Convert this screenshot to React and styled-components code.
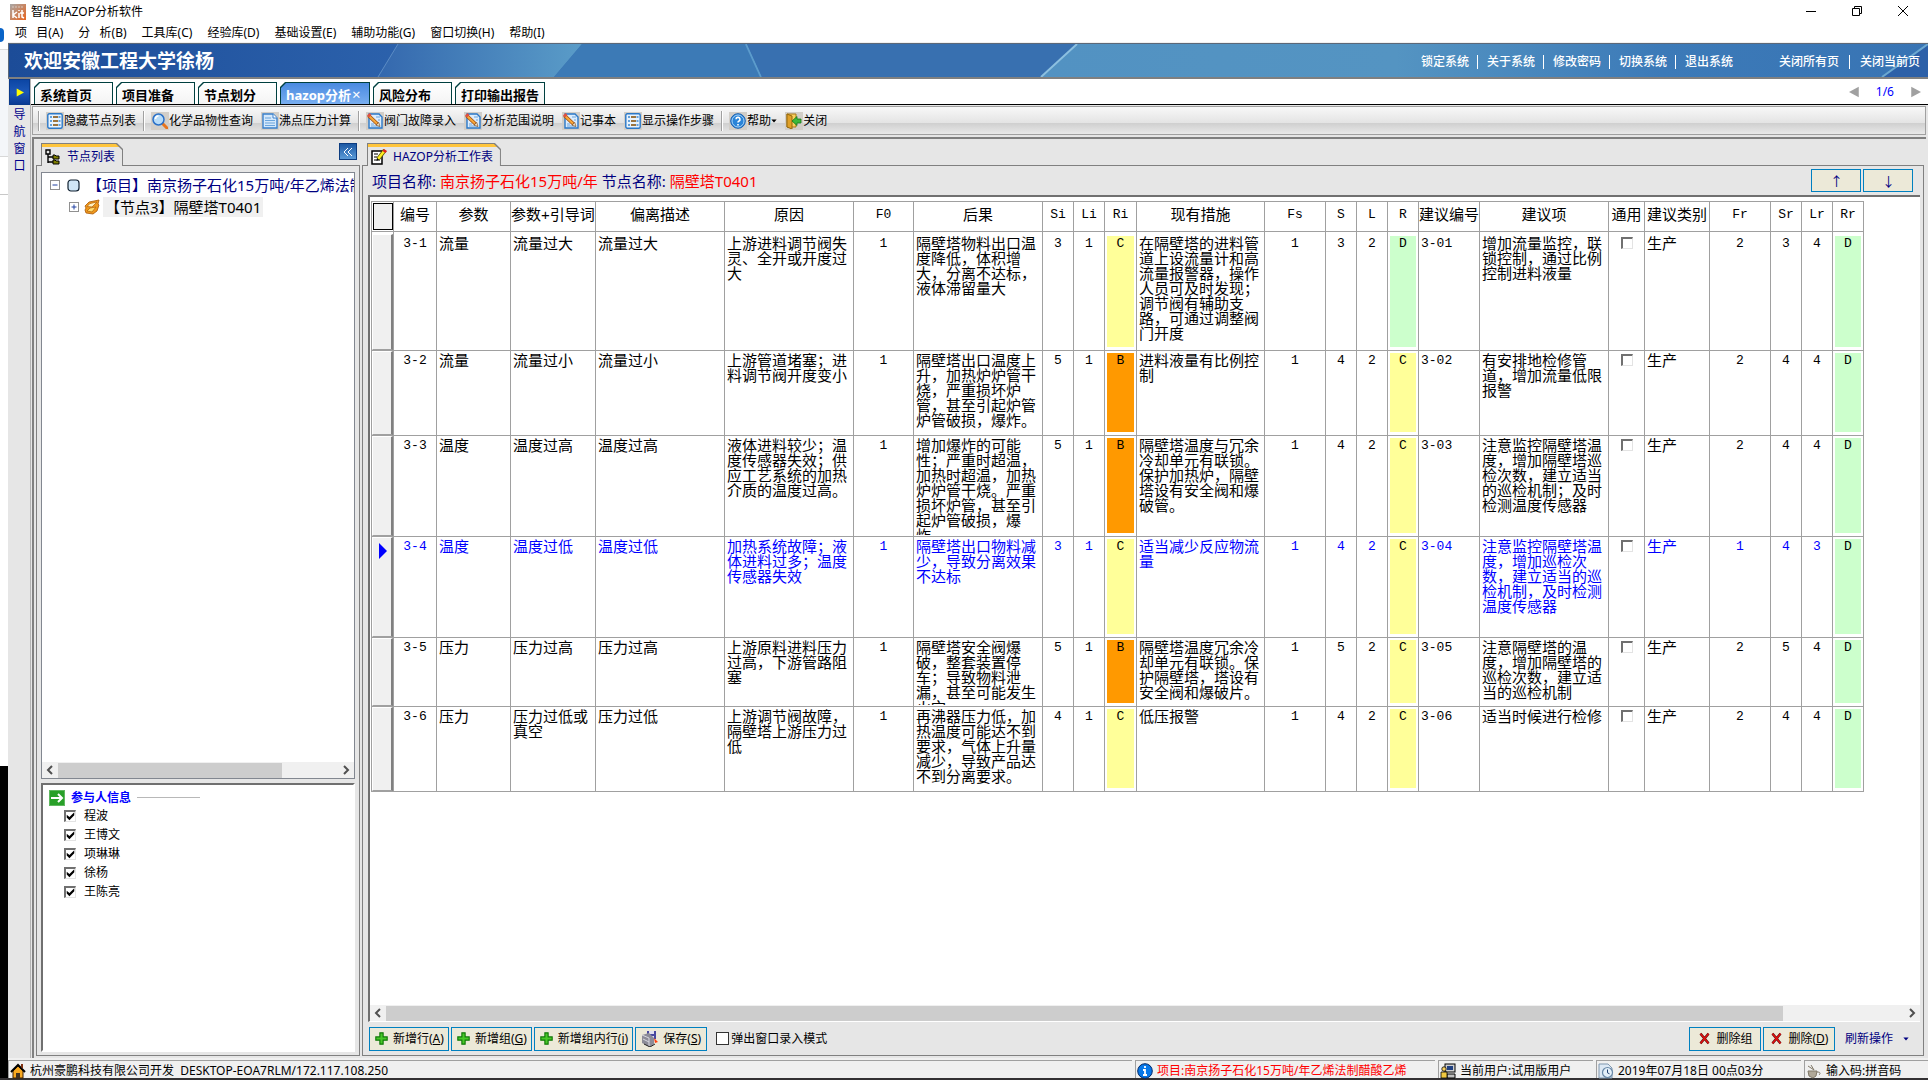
import styled, { createGlobalStyle, css } from "styled-components";

const GlobalStyle = createGlobalStyle`
* {
box-sizing: border-box;
}
body {
margin: 0;
background: #333133;
font-family: "Noto Sans", "Noto Sans CJK SC", sans-serif;
font-size: 12px;
line-height: 16px;
color: #000000;
text-spacing-trim: space-all;
}
button, input {
font: inherit;
color: inherit;
margin: 0;
}
a {
color: inherit;
text-decoration: none;
}
`;

const Screen = styled.div`
display: flex;
height: 100vh;
padding-bottom: 2px;
`;

const DesktopStrip = styled.div`
width: 8px;
background: linear-gradient(#ffffff 49px, #dcdcdc 49px, #dcdcdc 50px, #f4f6f9 50px, #f4f6f9 156px, #d8d8d8 156px, #d8d8d8 157px, #ffffff 157px, #ffffff 194px, #c8c8c8 194px, #c8c8c8 195px, #ffffff 195px, #ffffff 766px, #000000 766px);
`;

const DesktopDot = styled.div`
width: 4px;
height: 14px;
margin-top: 28px;
border-radius: 0 7px 7px 0;
background: #0a64c8;
`;

const Window = styled.div`
flex: 1;
min-width: 0;
display: flex;
flex-direction: column;
background: #ffffff;
`;

const TitleBar = styled.header`
display: flex;
align-items: center;
gap: 5px;
height: 22px;
padding: 2px 19px 0 2px;
`;

const WindowTitle = styled.h1`
flex: 1;
margin: 0;
font-size: 12px;
font-weight: 400;
`;

const WindowButtons = styled.div`
display: flex;
gap: 34px;
margin-bottom: 2px;
`;

const WindowButton = styled.button`
display: flex;
padding: 0;
border: 0;
background: none;
`;

const MenuBar = styled.nav`
display: flex;
align-items: center;
gap: 15px;
height: 21px;
padding: 2px 0 0 7px;
border-bottom: 1px solid #f0f0f0;
`;

const MenuItem = styled.button`
padding: 0;
border: 0;
background: none;
white-space: pre;
`;

const Banner = styled.div`
position: relative;
display: flex;
align-items: center;
justify-content: space-between;
height: 36px;
padding: 0 8px 0 15px;
border: solid #5c6878;
border-width: 1px 0 2px 1px;
border-bottom-color: #808080;
background: #3a74b4;
color: #ffffff;
`;

const BannerArt = styled.svg`
position: absolute;
inset: 0;
width: 100%;
height: 100%;
`;

const BannerTitle = styled.h2`
position: relative;
margin: 0;
font-size: 19px;
line-height: 26px;
font-weight: 700;
`;

const BannerLinks = styled.div`
position: relative;
display: flex;
gap: 46px;
padding-top: 2px;
font-weight: 500;
`;

const LinkGroup = styled.div`
display: flex;

a + a {
margin-left: ${({ $wide }) => ($wide ? "10px" : "8px")};
padding-left: ${({ $wide }) => ($wide ? "10px" : "9px")};
border-left: 1px solid #ffffff;
}
a {
line-height: 14px;
}
`;

const Body = styled.div`
flex: 1;
min-height: 0;
display: flex;
background: #e6e6e6;
`;

const NavRail = styled.aside`
width: 22px;
margin-left: 1px;
border-right: 1px solid #b4b4b4;
display: flex;
flex-direction: column;
align-items: center;
`;

const NavToggle = styled.button`
display: flex;
align-items: center;
justify-content: center;
width: 100%;
height: 26px;
padding: 0;
border: 1px solid #0a3a8c;
background: linear-gradient(#0c46a4, #1c58b8 50%, #0a3a94);
`;

const NavLabel = styled.div`
width: 12px;
margin-top: 1px;
line-height: 17px;
color: #00008b;
`;

const Content = styled.main`
flex: 1;
min-width: 0;
display: flex;
flex-direction: column;
`;

const TabBar = styled.div`
display: flex;
align-items: flex-end;
gap: 3px;
height: 26px;
padding: 0 7px 0 3px;
border-bottom: 1px solid #000000;
background: #ffffff;
`;

const PageTab = styled.button`
position: relative;
isolation: isolate;
width: ${({ $wide }) => ($wide ? "90px" : "79px")};
height: 22px;
padding: 3px 0 0 6px;
border: 0;
background: #004040;
clip-path: polygon(5px 0, 100% 0, 100% 100%, 0 100%, 0 5px);
color: ${({ $active }) => ($active ? "#ffffff" : "#000000")};
font-size: 13px;
line-height: 18px;
font-weight: 700;
text-align: left;
white-space: nowrap;

&::before {
content: "";
position: absolute;
inset: 1px 1px 0 1px;
z-index: -1;
clip-path: polygon(5px 0, 100% 0, 100% 100%, 0 100%, 0 5px);
background: ${({ $active }) => ($active ? "linear-gradient(#4a8ae0, #78aef0)" : "linear-gradient(#ffffff, #f4f4f4)")};
}
`;

const TabClose = styled.span`
margin-left: 1px;
font-weight: 400;
font-size: 15px;
`;

const Pager = styled.div`
display: flex;
align-items: center;
gap: 15px;
margin-left: auto;
height: 25px;
color: #0000ff;
`;

const PagerButton = styled.button`
display: flex;
padding: 0;
border: 0;
background: none;
`;

const Toolbar = styled.div`
display: flex;
align-items: center;
height: 29px;
margin: 1px 2px 0 1px;
padding-left: 5px;
border: 1px solid #a0a0a0;
background: linear-gradient(#f8f8f8, #e4e4e4 58%, #cfcfcf 60%, #e9e9e9);
`;

const ToolSeparator = styled.span`
width: 2px;
height: 20px;
margin: 0 6px 0 7px;
border-left: 1px solid #a0a0a0;
border-right: 1px solid #ffffff;

&:first-child {
margin-left: 0;
}
`;

const ToolButton = styled.button`
display: flex;
align-items: center;
padding: 0;
border: 0;
background: none;
white-space: nowrap;

& + & {
margin-left: 8px;
}
`;

const ToolIcon = styled.span`
display: flex;
align-items: center;
justify-content: center;
width: 18px;
height: 18px;
background: #d2cec8;
`;

const Workspace = styled.div`
flex: 1;
min-height: 0;
display: flex;
gap: 2px;
margin: 2px 2px 0 1px;
padding: 4px 2px 2px 2px;
border: solid #808080;
border-width: 2px 0 0 2px;
`;

const Column = styled.section`
display: flex;
flex-direction: column;
min-width: 0;
${({ $fixed }) => ($fixed ? "flex: 0 0 324px;" : "flex: 1;")}
`;

const ColumnHead = styled.div`
position: relative;
z-index: 1;
display: flex;
align-items: flex-start;
justify-content: space-between;
margin-bottom: -1px;
padding: 0 3px 0 5px;
`;

const PanelTab = styled.div`
position: relative;
isolation: isolate;
display: flex;
align-items: center;
gap: 6px;
height: 23px;
padding: 4px 8px 0 4px;
color: #000080;
background: #808080;
clip-path: polygon(0 0, calc(100% - 6px) 0, 100% 6px, 100% 100%, 0 100%);

&::before {
content: "";
position: absolute;
inset: 1px 1px 0 1px;
z-index: -1;
clip-path: polygon(0 0, calc(100% - 6px) 0, 100% 6px, 100% 100%, 0 100%);
background: linear-gradient(#ffc53c 3px, #e6e6e6 3px);
}
`;

const CollapseButton = styled.button`
display: flex;
align-items: center;
justify-content: center;
width: 18px;
height: 17px;
padding: 0;
border: 1px solid #0c3c80;
background: linear-gradient(#1c58a4, #5c9cd8);
`;

const Panel = styled.div`
flex: 1;
min-height: 0;
display: flex;
flex-direction: column;
border: 1px solid #808080;
`;

const SidePanel = styled(Panel)`
gap: 4px;
padding: 6px 4px 3px 4px;
`;

const TreeBox = styled.div`
flex: 605 1 0;
display: flex;
flex-direction: column;
min-height: 0;
border: 1px solid #828790;
background: #ffffff;
`;

const Tree = styled.ul`
flex: 1;
margin: 0;
padding: 1px 0 0 8px;
list-style: none;
overflow: hidden;

ul {
margin: 0;
padding: 0 0 0 19px;
list-style: none;
}
`;

const TreeRow = styled.div`
display: flex;
align-items: center;
height: 22px;
font-size: 15px;
line-height: 20px;
white-space: nowrap;
color: ${({ $root }) => ($root ? "#000080" : "#000000")};

svg {
flex: none;
}
`;

const Expander = styled.button`
display: flex;
flex: none;
padding: 0;
border: 0;
background: none;
margin-right: ${({ $root }) => ($root ? "7px" : "5px")};
`;

const TreeLabel = styled.span`
margin-left: ${({ $root }) => ($root ? "5px" : "3px")};
padding: 0 2px;
background: ${({ $root }) => ($root ? "none" : "#f0f0f0")};
`;

const PeopleBox = styled.div`
flex: 261 1 0;
min-height: 0;
padding: 4px 0 0 6px;
border: 2px solid #ffffff;
border-top-color: #707070;
border-left-color: #707070;
background: #ffffff;
`;

const PeopleHead = styled.div`
display: flex;
align-items: center;
gap: 6px;
height: 17px;
color: #0000ff;
font-weight: 700;
`;

const HeadRule = styled.span`
width: 63px;
height: 1px;
background: #b8b8b8;
`;

const PeopleLabel = styled.label`
display: flex;
align-items: center;
gap: 8px;
height: 19px;
padding-left: 15px;
`;

const Check = styled.input`
appearance: none;
position: relative;
width: 12px;
height: 12px;
background: #ffffff;
${({ $flat }) =>
        $flat
            ? css`border: 1px solid #333333; width: 13px; height: 13px;`
            : css`
border: 1px solid #e3e3e3;
border-top: 2px solid #707070;
border-left: 2px solid #707070;
`}

&:checked::after {
content: "";
position: absolute;
inset: 0;
clip-path: polygon(8% 35%, 38% 62%, 92% 8%, 92% 42%, 38% 96%, 8% 68%);
background: #000000;
}
`;

const ScrollTrack = styled.div`
display: flex;
align-items: center;
height: 16px;
background: #f0f0f0;
`;

const ScrollArrow = styled.button`
display: flex;
justify-content: center;
flex: 0 0 16px;
padding: 0;
border: 0;
background: none;
`;

const ScrollRail = styled.div`
flex: 1;
height: 15px;
`;

const ScrollThumb = styled.div`
width: ${({ $size }) => $size};
height: 100%;
background: #cdcdcd;
`;

const ProjectBar = styled.div`
display: flex;
align-items: center;
gap: 4px;
height: 29px;
padding: 0 10px 0 9px;
font-size: 15px;
line-height: 20px;
color: #000080;
white-space: nowrap;
`;

const RedText = styled.span`
color: #ff0000;
`;

const MoveButtons = styled.div`
display: flex;
gap: 2px;
margin-left: auto;
`;

const BorderedButton = styled.button`
display: flex;
align-items: center;
justify-content: center;
gap: 5px;
min-width: 72px;
height: 24px;
padding: 0 4px 0 5px;
border: 1px solid #0080c0;
background: #ece9d8;
white-space: nowrap;
`;

const MoveButton = styled(BorderedButton)`
min-width: 50px;
height: 23px;
font-size: 13px;
`;

const GridFrame = styled.div`
flex: 1;
min-height: 0;
display: flex;
flex-direction: column;
margin: 0 3px 0 5px;
border: solid #707070;
border-width: 2px 0 0 2px;
background: #ffffff;
border-bottom: 1px solid #ffffff;
`;

const GridScroll = styled.div`
flex: 1;
min-height: 0;
padding: 4px 0 0 1px;
overflow: hidden;
`;

const Grid = styled.table`
width: 1493px;
table-layout: fixed;
border-collapse: separate;
border-spacing: 0;
border-top: 1px solid #a0a0a0;
border-left: 1px solid #a0a0a0;
font-family: "Liberation Sans", "Noto Sans CJK SC", sans-serif;
font-size: 15px;
line-height: 15px;
`;

const HeadCell = styled.th`
height: 30px;
padding: 0 0 9px;
border-right: 1px solid #a0a0a0;
border-bottom: 1px solid #a0a0a0;
font-weight: 400;
vertical-align: bottom;
white-space: nowrap;
font-family: ${({ $mono }) => ($mono ? '"Liberation Mono", monospace' : "inherit")};
font-size: ${({ $mono }) => ($mono ? "13px" : "15px")};
`;

const CornerCell = styled(HeadCell)`
padding: 1px 0 1px 1px;
vertical-align: middle;
`;

const Corner = styled.div`
height: 27px;
border: 1px solid #000000;
background: #f0f0f0;
`;

const GridRow = styled.tr`
color: ${({ $current }) => ($current ? "#0000ff" : "#000000")};
`;

const Cell = styled.td`
height: ${({ $height }) => $height}px;
padding: 0;
border-right: 1px solid #a0a0a0;
border-bottom: 1px solid #a0a0a0;
vertical-align: top;

tr:first-child > & {
padding-top: 2px;
}
`;

const CellText = styled.div`
height: ${({ $height }) => $height}px;
padding: 2px 2px 0;
overflow: hidden;
text-align: ${({ $align }) => $align || "left"};
font-family: ${({ $mono }) => ($mono ? '"Liberation Mono", monospace' : "inherit")};
font-size: ${({ $mono }) => ($mono ? "13px" : "15px")};
`;

const riskColors = { B: "#ff9900", C: "#ffff99", D: "#ccffcc" };

const RiskFill = styled(CellText)`
margin: 2px 2px 0;
padding: 0;
color: #000000;
background: ${({ $level }) => riskColors[$level]};
`;

const RowHandle = styled.div`
display: flex;
height: ${({ $height }) => $height}px;
padding: 5px 0 0 6px;
border: 1px solid #ffffff;
border-right: 2px solid #808080;
border-bottom: 1px solid #a0a0a0;
background: #f0f0f0;
`;

const GridFooter = styled.div`
display: flex;
align-items: center;
gap: 2px;
height: 33px;
padding: 0 12px 0 6px;
`;

const PopupLabel = styled.label`
display: flex;
align-items: center;
gap: 2px;
margin-left: 7px;
`;

const FooterRight = styled.div`
display: flex;
align-items: center;
gap: 2px;
margin-left: auto;
`;

const RefreshButton = styled.button`
display: flex;
align-items: center;
gap: 10px;
margin-left: 5px;
padding: 0 2px 0 3px;
border: 0;
background: none;
color: #000080;
`;

const StatusBar = styled.footer`
display: flex;
gap: 3px;
height: 20px;
padding: 2px 0 0;
background: #f0f0f0;
`;

const StatusPane = styled.div`
display: flex;
align-items: center;
gap: 4px;
flex: ${({ $width }) => ($width ? `0 0 ${$width}px` : "1")};
min-width: 0;
padding: 2px 0 0 1px;
border: 1px solid #a0a0a0;
border-right: 0;
border-bottom: 0;
white-space: pre;
color: ${({ $red }) => ($red ? "#ff0000" : "#000000")};
`;

const Icon = ({ size = 16, children }) => (
    <svg width={size} height={size} viewBox="0 0 16 16" aria-hidden="true">{children}</svg>
);

const AppIcon = () => (
    <Icon>
        <defs>
            <linearGradient id="kit" x1="0" y1="0" x2="1" y2="1">
                <stop offset="0" stopColor="#a8a8a8" />
                <stop offset="1" stopColor="#e8641e" />
            </linearGradient>
        </defs>
        <rect width="16" height="16" fill="url(#kit)" />
        <path d="M2 3h12" stroke="#d8c8c0" strokeDasharray="2 1" />
        <path d="M3 6v8M7 8l-4 3 4 3M9 9v5M9 6v1M12 6v7l2 1M10 9h4" stroke="#ffffff" strokeWidth="1.5" fill="none" />
    </Icon>
);

const ListIcon = () => (
    <Icon>
        <rect x="0.8" y="0.8" width="14.4" height="14.4" rx="1.5" fill="#e8f3fd" stroke="#2a78c8" strokeWidth="1.4" />
        <path d="M3 4h2M3 8h2M3 12h2M11.500 4h2M11.500 8h2M11.500 12h2" stroke="#3a86d0" strokeWidth="1.4" />
        <path d="M6 4h5M6 8h5M6 12h5" stroke="#9a7440" strokeWidth="2" />
    </Icon>
);

const SearchIcon = () => (
    <Icon>
        <path d="M10 10l5 5" stroke="#e8741c" strokeWidth="3" strokeLinecap="round" />
        <circle cx="6.500" cy="6.500" r="5.500" fill="#b8dcf8" stroke="#2a70c8" strokeWidth="1.5" />
        <path d="M3.500 6a3 3 0 0 1 3-3" stroke="#ffffff" strokeWidth="1.5" fill="none" />
    </Icon>
);

const PageIcon = () => (
    <Icon>
        <path d="M1 1h10l4 4v10H1z" fill="#d4e8fb" stroke="#3a80cc" strokeWidth="1.4" />
        <path d="M11 1v4h4" fill="#ffffff" stroke="#3a80cc" />
        <path d="M3 5h6M3 7.500h10M3 10h10M3 12.500h10" stroke="#6aa4dc" />
    </Icon>
);

const NoteIcon = () => (
    <Icon>
        <path d="M2 1h10l3 3v11H2z" fill="#dcecfc" stroke="#2a78c8" strokeWidth="1.400" />
        <path d="M9 4h4M11 7h2M4 11h3M4 13h9" stroke="#6aa4dc" />
        <path d="M1.500 2.500L10.500 11" stroke="#9a4a10" strokeWidth="3.600" />
        <path d="M2 3l8 7.500" stroke="#f8a838" strokeWidth="2.200" />
        <path d="M0 2.500L2.500 0l2 2L2 4.500z" fill="#e05040" />
        <path d="M9 12.200l2.800-2.700 1.200 4z" fill="#f8e4c0" stroke="#704010" strokeWidth="0.600" />
    </Icon>
);

const HelpIcon = () => (
    <Icon>
        <circle cx="8" cy="8" r="7.300" fill="#2a84d8" stroke="#1a60b0" />
        <circle cx="8" cy="8" r="6" fill="none" stroke="#a8d4f8" />
        <path d="M6 6.300a2 2 0 1 1 2.800 1.900c-.6.300-.8.600-.8 1.400M8 11v1.400" stroke="#ffffff" strokeWidth="1.600" fill="none" />
    </Icon>
);

const ExitIcon = () => (
    <Icon>
        <path d="M1 1h9v13H1z" fill="#f8d060" stroke="#a87818" />
        <path d="M1 1l5 2v13l-5-2z" fill="#e0a028" stroke="#94680c" />
        <path d="M6 8l5-4.500V6h4v4h-4v2.500z" fill="#3cb83c" stroke="#187818" strokeWidth="0.800" />
    </Icon>
);

const TreeIcon = () => (
    <Icon>
        <path d="M1 1h4v4H1zM3 5v9M3 8h5M3 13h5" fill="none" stroke="#000000" strokeWidth="1.400" />
        <path d="M8 6h2l1 1h3v3H8zM8 11h2l1 1h3v3H8z" fill="#808000" stroke="#000000" />
    </Icon>
);

const EditIcon = () => (
    <Icon>
        <path d="M1 2h10v13H1z" fill="#ffffff" stroke="#000000" strokeWidth="1.500" />
        <path d="M3 5h4M3 8h3M3 11h6" stroke="#000000" strokeWidth="1.200" />
        <path d="M14 1L7 10" stroke="#605800" strokeWidth="4" />
        <path d="M14 1L7 10" stroke="#ffee20" strokeWidth="2.500" />
        <path d="M13 0l3 2-1.500 2-3-2z" fill="#e02020" />
        <path d="M5.500 12l.5-3 2 1.500z" fill="#000000" />
    </Icon>
);

const NodeIcon = () => (
    <svg width="13" height="13" viewBox="0 0 13 13" aria-hidden="true">
        <rect x="1" y="1" width="11" height="11" rx="3" fill="#d0e6f6" stroke="#102030" strokeWidth="1.200" />
    </svg>
);

const TagIcon = () => (
    <Icon>
        <path d="M1 7l4-4 10-2-1 4 1 1-2 6-4 3-7-1-1-3 1-2z" fill="#f0981c" stroke="#a85808" strokeWidth="0.800" />
        <path d="M3 7.500L6 4.500l7-1.500-5 5z" fill="#fff0c0" stroke="#b86810" strokeWidth="0.800" />
        <path d="M3 12l3-3 6-1-4 5z" fill="#ffdc70" stroke="#b86810" strokeWidth="0.800" />
    </Icon>
);

const ExpanderIcon = ({ open }) => (
    <svg width="10" height="10" viewBox="0 0 10 10" aria-hidden="true">
        <rect x="0.500" y="0.500" width="9" height="9" fill="#ffffff" stroke="#909090" />
        <path d={open ? "M2.500 5h5" : "M2.500 5h5M5 2.500v5"} stroke="#2040a0" />
    </svg>
);

const GoIcon = () => (
    <Icon>
        <rect x="0.500" y="0.500" width="15" height="15" fill="#28a028" stroke="#60b860" />
        <path d="M2 8h11M9 4l4 4-4 4" fill="none" stroke="#ffffff" strokeWidth="2" />
    </Icon>
);

const PlusIcon = () => (
    <Icon size={13}>
        <path d="M6 1h4v5h5v4h-5v5H6v-5H1V6h5z" fill="#48c828" stroke="#107808" strokeWidth="1.400" />
    </Icon>
);

const SaveIcon = () => (
    <Icon>
        <path d="M5 0h9v8H5z" fill="#4848a0" />
        <path d="M7 0h5v3H7zM7 5h5v3H7z" fill="#e0e0f0" />
        <path d="M0 4l7-2 5 5v6l-4 3-8-4z" fill="#8c8c98" />
        <path d="M0 4l7 3v8M1 8l6 3" stroke="#d8d8e0" fill="none" />
        <path d="M12 7l4 4-3 1z" fill="#ff4010" />
        <path d="M2 13l6 3 5-3" stroke="#202020" fill="none" />
    </Icon>
);

const CrossIcon = () => (
    <Icon size={13}>
        <path d="M3 2l10 12M13 2L3 14" stroke="#601010" strokeWidth="3" />
        <path d="M3 2l10 12M13 2L3 14" stroke="#e81010" strokeWidth="1.800" />
    </Icon>
);

const HomeIcon = () => (
    <Icon>
        <path d="M3 8v7h10V8L8 3z" fill="#f8a820" stroke="#402000" />
        <path d="M1 9l7-7 7 7" fill="none" stroke="#000000" strokeWidth="2" />
        <path d="M11 1h2v5l-2-2z" fill="#803010" />
        <path d="M6 10h4v5H6z" fill="#403020" />
    </Icon>
);

const InfoIcon = () => (
    <Icon>
        <circle cx="8" cy="8" r="7.300" fill="#0878e8" stroke="#002868" />
        <path d="M8 3v2M6 7h2v5M6 12h4" stroke="#ffffff" strokeWidth="1.800" fill="none" />
    </Icon>
);

const UserIcon = () => (
    <Icon>
        <rect x="5" y="1" width="10" height="8" fill="#d0d0d0" stroke="#000000" />
        <rect x="7" y="3" width="6" height="4" fill="#204080" />
        <path d="M7 11h8v4H7z" fill="#c0c0c0" stroke="#000000" />
        <circle cx="4" cy="6" r="2.200" fill="#f8d060" stroke="#000000" strokeWidth="0.800" />
        <path d="M1 15V9h6v6z" fill="#f0c840" stroke="#000000" strokeWidth="0.800" />
    </Icon>
);

const ClockIcon = () => (
    <Icon>
        <path d="M1 1h9l4 4v10H1z" fill="#dce8f4" stroke="#8098b0" />
        <circle cx="9.500" cy="9.500" r="5" fill="#e4f0fa" stroke="#6888a8" strokeWidth="1.200" />
        <path d="M9.500 6.500v3.300l2 1" fill="none" stroke="#204070" />
    </Icon>
);

const PenIcon = () => (
    <Icon>
        <path d="M2 8h9l-1 5-3 2-4-2z" fill="#b0a898" stroke="#807868" />
        <path d="M2 3l6 4M5 2l3 5M11 9c3 0 4 1 2 3" fill="none" stroke="#807868" />
    </Icon>
);

const RowPointer = () => (
    <svg width="8" height="16" viewBox="0 0 8 16" aria-hidden="true">
        <path d="M0 0v16l8-8z" fill="#0000ff" />
    </svg>
);

const Triangle = ({ dir, color, size = 12 }) => {
    const paths = {
        left: "M13 1v14L0 8z",
        right: "M3 1v14l13-7z",
        down: "M1 4h14l-7 8z",
    };
    return <Icon size={size}><path d={paths[dir]} fill={color} /></Icon>;
};

const Chevron = ({ dir }) => (
    <svg width="8" height="10" viewBox="0 0 8 10" aria-hidden="true">
        <path d={dir === "left" ? "M6 1L2 5l4 4" : "M2 1l4 4-4 4"} fill="none" stroke="#505050" strokeWidth="2" />
    </svg>
);

const ScrollBar = ({ size }) => (
    <ScrollTrack>
        <ScrollArrow aria-label="向左"><Chevron dir="left" /></ScrollArrow>
        <ScrollRail><ScrollThumb $size={size} /></ScrollRail>
        <ScrollArrow aria-label="向右"><Chevron dir="right" /></ScrollArrow>
    </ScrollTrack>
);

const menus = ["项   目(A)", "分   析(B)", "工具库(C)", "经验库(D)", "基础设置(E)", "辅助功能(G)", "窗口切换(H)", "帮助(I)"];

const pageTabs = [
    { label: "系统首页" },
    { label: "项目准备" },
    { label: "节点划分" },
    { label: "hazop分析", active: true, wide: true },
    { label: "风险分布" },
    { label: "打印输出报告", wide: true },
];

const tools = [
    null,
    { label: "隐藏节点列表", icon: ListIcon },
    null,
    { label: "化学品物性查询", icon: SearchIcon },
    { label: "沸点压力计算", icon: PageIcon },
    null,
    { label: "阀门故障录入", icon: NoteIcon },
    { label: "分析范围说明", icon: NoteIcon },
    { label: "记事本", icon: NoteIcon },
    { label: "显示操作步骤", icon: ListIcon },
    null,
    { label: "帮助", icon: HelpIcon, menu: true },
    { label: "关闭", icon: ExitIcon },
];

const people = ["程波", "王博文", "项琳琳", "徐杨", "王陈亮"];

const columns = [
    { key: "no", label: "编号", width: 43, mono: true, align: "center" },
    { key: "param", label: "参数", width: 74 },
    { key: "guide", label: "参数+引导词", width: 85 },
    { key: "deviation", label: "偏离描述", width: 129 },
    { key: "cause", label: "原因", width: 129 },
    { key: "f0", label: "F0", width: 60, mono: true, align: "center" },
    { key: "result", label: "后果", width: 129 },
    { key: "si", label: "Si", width: 31, mono: true, align: "center" },
    { key: "li", label: "Li", width: 31, mono: true, align: "center" },
    { key: "ri", label: "Ri", width: 32, risk: true },
    { key: "measure", label: "现有措施", width: 128 },
    { key: "fs", label: "Fs", width: 61, mono: true, align: "center" },
    { key: "s", label: "S", width: 31, mono: true, align: "center" },
    { key: "l", label: "L", width: 31, mono: true, align: "center" },
    { key: "r", label: "R", width: 31, risk: true },
    { key: "adviceNo", label: "建议编号", width: 61, mono: true },
    { key: "advice", label: "建议项", width: 129 },
    { key: "common", label: "通用", width: 36, check: true },
    { key: "kind", label: "建议类别", width: 65 },
    { key: "fr", label: "Fr", width: 61, mono: true, align: "center" },
    { key: "sr", label: "Sr", width: 31, mono: true, align: "center" },
    { key: "lr", label: "Lr", width: 31, mono: true, align: "center" },
    { key: "rr", label: "Rr", width: 31, risk: true },
];

const rows = [
    {
        height: 119, no: "3-1", param: "流量", guide: "流量过大", deviation: "流量过大",
        cause: "上游进料调节阀失灵、全开或开度过大", f0: 1,
        result: "隔壁塔物料出口温度降低，体积增大，分离不达标，液体滞留量大", si: 3, li: 1, ri: "C",
        measure: "在隔壁塔的进料管道上设流量计和高流量报警器，操作人员可及时发现；调节阀有辅助支路，可通过调整阀门开度",
        fs: 1, s: 3, l: 2, r: "D", adviceNo: "3-01",
        advice: "增加流量监控，联锁控制，通过比例控制进料液量", kind: "生产", fr: 2, sr: 3, lr: 4, rr: "D",
    },
    {
        height: 85, no: "3-2", param: "流量", guide: "流量过小", deviation: "流量过小",
        cause: "上游管道堵塞；进料调节阀开度变小", f0: 1,
        result: "隔壁塔出口温度上升，加热炉炉管干烧，严重损坏炉管，甚至引起炉管炉管破损，爆炸。", si: 5, li: 1, ri: "B",
        measure: "进料液量有比例控制", fs: 1, s: 4, l: 2, r: "C", adviceNo: "3-02",
        advice: "有安排地检修管道，增加流量低限报警", kind: "生产", fr: 2, sr: 4, lr: 4, rr: "D",
    },
    {
        height: 101, no: "3-3", param: "温度", guide: "温度过高", deviation: "温度过高",
        cause: "液体进料较少；温度传感器失效；供应工艺系统的加热介质的温度过高。", f0: 1,
        result: "增加爆炸的可能性；严重时超温，加热时超温，加热炉炉管干烧。严重损坏炉管，甚至引起炉管破损，爆炸。", si: 5, li: 1, ri: "B",
        measure: "隔壁塔温度与冗余冷却单元有联锁。保护加热炉，隔壁塔设有安全阀和爆破管。", fs: 1, s: 4, l: 2, r: "C", adviceNo: "3-03",
        advice: "注意监控隔壁塔温度，增加隔壁塔巡检次数，建立适当的巡检机制；及时检测温度传感器", kind: "生产", fr: 2, sr: 4, lr: 4, rr: "D",
    },
    {
        height: 101, current: true, no: "3-4", param: "温度", guide: "温度过低", deviation: "温度过低",
        cause: "加热系统故障；液体进料过多；温度传感器失效", f0: 1,
        result: "隔壁塔出口物料减少，导致分离效果不达标", si: 3, li: 1, ri: "C",
        measure: "适当减少反应物流量", fs: 1, s: 4, l: 2, r: "C", adviceNo: "3-04",
        advice: "注意监控隔壁塔温度，增加巡检次数，建立适当的巡检机制，及时检测温度传感器", kind: "生产", fr: 1, sr: 4, lr: 3, rr: "D",
    },
    {
        height: 69, no: "3-5", param: "压力", guide: "压力过高", deviation: "压力过高",
        cause: "上游原料进料压力过高，下游管路阻塞", f0: 1,
        result: "隔壁塔安全阀爆破，整套装置停车；导致物料泄漏，甚至可能发生火灾", si: 5, li: 1, ri: "B",
        measure: "隔壁塔温度冗余冷却单元有联锁。保护隔壁塔，塔设有安全阀和爆破片。", fs: 1, s: 5, l: 2, r: "C", adviceNo: "3-05",
        advice: "注意隔壁塔的温度，增加隔壁塔的巡检次数，建立适当的巡检机制", kind: "生产", fr: 2, sr: 5, lr: 4, rr: "D",
    },
    {
        height: 85, no: "3-6", param: "压力", guide: "压力过低或真空", deviation: "压力过低",
        cause: "上游调节阀故障，隔壁塔上游压力过低", f0: 1,
        result: "再沸器压力低，加热温度可能达不到要求，气体上升量减少，导致产品达不到分离要求。", si: 4, li: 1, ri: "C",
        measure: "低压报警", fs: 1, s: 4, l: 2, r: "C", adviceNo: "3-06",
        advice: "适当时候进行检修", kind: "生产", fr: 2, sr: 4, lr: 4, rr: "D",
    },
];

const GridCell = ({ column, row, first }) => {
    const height = row.height - (first ? 4 : 2);
    if (column.risk) {
        return (
            <Cell $height={row.height}>
                <RiskFill $height={height - 4} $level={row[column.key]} $mono $align="center">{row[column.key]}</RiskFill>
            </Cell>
        );
    }
    return (
        <Cell $height={row.height}>
            <CellText $height={height} $mono={column.mono} $align={column.check ? "center" : column.align}>
                {column.check ? <Check type="checkbox" aria-label={`${row.no} 通用`} /> : row[column.key]}
            </CellText>
        </Cell>
    );
};

const HazopGrid = () => (
    <Grid>
        <colgroup>
            <col style={{ width: 22 }} />
            {columns.map((column) => <col key={column.key} style={{ width: column.width }} />)}
        </colgroup>
        <thead>
            <tr>
                <CornerCell><Corner /></CornerCell>
                {columns.map((column) => (
                    <HeadCell key={column.key} $mono={/^[A-Z]/.test(column.label)}>{column.label}</HeadCell>
                ))}
            </tr>
        </thead>
        <tbody>
            {rows.map((row, index) => (
                <GridRow key={row.no} $current={row.current}>
                    <Cell $height={row.height}>
                        <RowHandle $height={row.height - (index === 0 ? 3 : 1)}>
                            {row.current && <RowPointer />}
                        </RowHandle>
                    </Cell>
                    {columns.map((column) => <GridCell key={column.key} column={column} row={row} first={index === 0} />)}
                </GridRow>
            ))}
        </tbody>
    </Grid>
);

const HeaderBanner = () => (
    <Banner>
        <BannerArt viewBox="0 0 1919 33" preserveAspectRatio="none" aria-hidden="true">
            <defs>
                <linearGradient id="deep"><stop offset="0" stopColor="#1c4c98" /><stop offset="1" stopColor="#2c62ac" /></linearGradient>
                <linearGradient id="glow"><stop offset="0" stopColor="#3468ae" /><stop offset="1" stopColor="#5a9cc8" /></linearGradient>
                <linearGradient id="fade"><stop offset="0" stopColor="#5292c2" /><stop offset="0.4" stopColor="#5494c2" /><stop offset="0.7" stopColor="#3c7ab8" /><stop offset="1" stopColor="#3874b4" /></linearGradient>
            </defs>
            <path d="M0 0h400v33H0z" fill="url(#deep)" />
            <path d="M389 0h184l-28 33H369z" fill="url(#glow)" />
            <path d="M389 0l-20 33" stroke="#5c8cc4" />
            <path d="M573 0h164l15 33H545z" fill="#3c7ab6" />
            <path d="M737 0l15 33" stroke="#5c9ccc" strokeWidth="2" />
            <path d="M738 0h330l-36 33H753z" fill="#3870b0" />
            <path d="M1068 0h851v33h-887z" fill="url(#fade)" />
            <path d="M1068 0l-36 33" stroke="#8cc0e0" strokeWidth="2" />
            <path d="M1919 0v33h-46z" fill="#2c60a8" />
            <path d="M1919 0l-46 33" stroke="#6ca8d0" strokeWidth="2" />
        </BannerArt>
        <BannerTitle>欢迎安徽工程大学徐杨</BannerTitle>
        <BannerLinks>
            <LinkGroup>
                {["锁定系统", "关于系统", "修改密码", "切换系统", "退出系统"].map((label) => <a key={label} href="#">{label}</a>)}
            </LinkGroup>
            <LinkGroup $wide>
                {["关闭所有页", "关闭当前页"].map((label) => <a key={label} href="#">{label}</a>)}
            </LinkGroup>
        </BannerLinks>
    </Banner>
);

const SideColumn = () => (
    <Column $fixed>
        <ColumnHead>
            <PanelTab><TreeIcon />节点列表</PanelTab>
            <CollapseButton aria-label="折叠">
                <svg width="10" height="8" viewBox="0 0 10 8" aria-hidden="true">
                    <path d="M5 0L1 4l4 4M9 0L5 4l4 4" fill="none" stroke="#ffffff" />
                </svg>
            </CollapseButton>
        </ColumnHead>
        <SidePanel>
            <TreeBox>
                <Tree>
                    <li>
                        <TreeRow $root>
                            <Expander $root aria-label="收起"><ExpanderIcon open /></Expander>
                            <NodeIcon />
                            <TreeLabel $root>【项目】南京扬子石化15万吨/年乙烯法制醋酸乙烯</TreeLabel>
                        </TreeRow>
                        <ul>
                            <li>
                                <TreeRow>
                                    <Expander aria-label="展开"><ExpanderIcon /></Expander>
                                    <TagIcon />
                                    <TreeLabel>【节点3】隔壁塔T0401</TreeLabel>
                                </TreeRow>
                            </li>
                        </ul>
                    </li>
                </Tree>
                <ScrollBar size="80%" />
            </TreeBox>
            <PeopleBox>
                <PeopleHead><GoIcon />参与人信息<HeadRule /></PeopleHead>
                {people.map((name) => (
                    <PeopleLabel key={name}><Check type="checkbox" defaultChecked />{name}</PeopleLabel>
                ))}
            </PeopleBox>
        </SidePanel>
    </Column>
);

const SheetColumn = () => (
    <Column>
        <ColumnHead>
            <PanelTab><EditIcon />HAZOP分析工作表</PanelTab>
        </ColumnHead>
        <Panel>
            <ProjectBar>
                <span>项目名称:</span>
                <RedText>南京扬子石化15万吨/年</RedText>
                <span>节点名称:</span>
                <RedText>隔壁塔T0401</RedText>
                <MoveButtons>
                    <MoveButton>↑</MoveButton>
                    <MoveButton>↓</MoveButton>
                </MoveButtons>
            </ProjectBar>
            <GridFrame>
                <GridScroll><HazopGrid /></GridScroll>
                <ScrollBar size="92%" />
            </GridFrame>
            <GridFooter>
                <BorderedButton><PlusIcon /><span>新增行(<u>A</u>)</span></BorderedButton>
                <BorderedButton><PlusIcon /><span>新增组(<u>G</u>)</span></BorderedButton>
                <BorderedButton><PlusIcon /><span>新增组内行(<u>i</u>)</span></BorderedButton>
                <BorderedButton><SaveIcon /><span>保存(<u>S</u>)</span></BorderedButton>
                <PopupLabel><Check type="checkbox" $flat />弹出窗口录入模式</PopupLabel>
                <FooterRight>
                    <BorderedButton><CrossIcon />删除组</BorderedButton>
                    <BorderedButton><CrossIcon /><span>删除(<u>D</u>)</span></BorderedButton>
                    <RefreshButton>刷新操作<Triangle dir="down" color="#000080" size={6} /></RefreshButton>
                </FooterRight>
            </GridFooter>
        </Panel>
    </Column>
);

const App = () => {
    return (
        <Screen>
            <GlobalStyle />
            <DesktopStrip><DesktopDot /></DesktopStrip>
            <Window>
                <TitleBar>
                    <AppIcon />
                    <WindowTitle>智能HAZOP分析软件</WindowTitle>
                    <WindowButtons>
                        <WindowButton aria-label="最小化">
                            <svg width="12" height="12" viewBox="0 0 12 12"><path d="M1 6.500h10" stroke="#000000" /></svg>
                        </WindowButton>
                        <WindowButton aria-label="还原">
                            <svg width="12" height="12" viewBox="0 0 12 12"><path d="M1.500 3.500h7v7h-7zM3.500 3.500v-2h7v7h-2" fill="none" stroke="#000000" /></svg>
                        </WindowButton>
                        <WindowButton aria-label="关闭窗口">
                            <svg width="12" height="12" viewBox="0 0 12 12"><path d="M1 1l10 10M11 1L1 11" stroke="#000000" /></svg>
                        </WindowButton>
                    </WindowButtons>
                </TitleBar>
                <MenuBar>
                    {menus.map((menu) => <MenuItem key={menu}>{menu}</MenuItem>)}
                </MenuBar>
                <HeaderBanner />
                <Body>
                    <NavRail>
                        <NavToggle aria-label="展开导航"><Triangle dir="right" color="#ffff00" size={9} /></NavToggle>
                        <NavLabel>导航窗口</NavLabel>
                    </NavRail>
                    <Content>
                        <TabBar>
                            {pageTabs.map((tab) => (
                                <PageTab key={tab.label} $active={tab.active} $wide={tab.wide}>
                                    {tab.label}{tab.active && <TabClose>×</TabClose>}
                                </PageTab>
                            ))}
                            <Pager>
                                <PagerButton aria-label="上一页"><Triangle dir="left" color="#a0a0a0" /></PagerButton>
                                1/6
                                <PagerButton aria-label="下一页"><Triangle dir="right" color="#a0a0a0" /></PagerButton>
                            </Pager>
                        </TabBar>
                        <Toolbar>
                            {tools.map((tool, index) =>
                                tool ? (
                                    <ToolButton key={index}>
                                        <ToolIcon><tool.icon /></ToolIcon>
                                        {tool.label}
                                        {tool.menu && <Triangle dir="down" color="#000000" size={6} />}
                                    </ToolButton>
                                ) : (
                                    <ToolSeparator key={index} />
                                )
                            )}
                        </Toolbar>
                        <Workspace>
                            <SideColumn />
                            <SheetColumn />
                        </Workspace>
                    </Content>
                </Body>
                <StatusBar>
                    <StatusPane><HomeIcon />杭州豪鹏科技有限公司开发  DESKTOP-EOA7RLM/172.117.108.250</StatusPane>
                    <StatusPane $width={300} $red><InfoIcon />项目:南京扬子石化15万吨/年乙烯法制醋酸乙烯</StatusPane>
                    <StatusPane $width={155}><UserIcon />当前用户:试用版用户</StatusPane>
                    <StatusPane $width={205}><ClockIcon />2019年07月18日 00点03分</StatusPane>
                    <StatusPane $width={124}><PenIcon />输入码:拼音码</StatusPane>
                </StatusBar>
            </Window>
        </Screen>
    );
};

export default App;
